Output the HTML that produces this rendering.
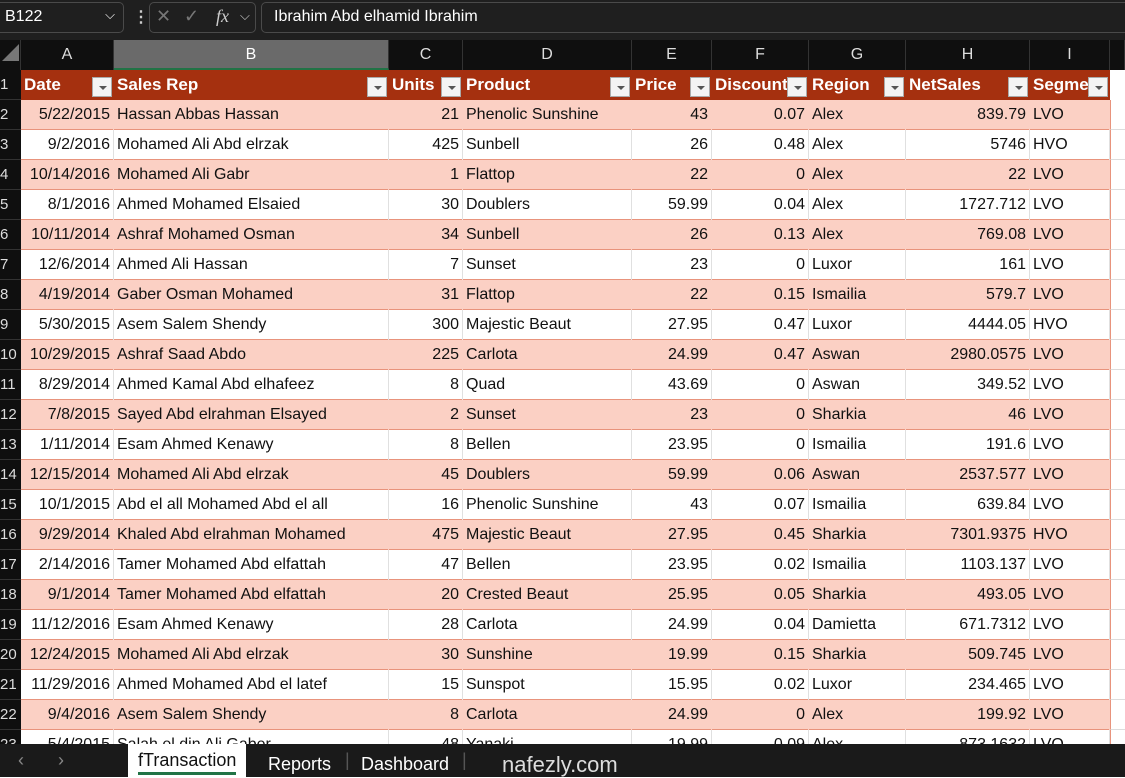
<!DOCTYPE html><html><head><style>
*{margin:0;padding:0;box-sizing:border-box}
body{width:1125px;height:777px;overflow:hidden;background:#fff;font-family:"Liberation Sans",sans-serif;position:relative}
.top{position:absolute;left:0;top:0;width:1125px;height:40px;background:#1f1f1f}
.nb{position:absolute;left:-6px;top:2px;width:130px;height:31px;border:1px solid #4a4a4a;border-radius:5px;color:#fff;font-size:16px;padding:5px 0 0 10px}
.fx{position:absolute;left:149px;top:2px;width:107px;height:31px;border:1px solid #4a4a4a;border-radius:5px;color:#777;font-size:18px}
.fb{position:absolute;left:261px;top:2px;width:880px;height:31px;border:1px solid #4a4a4a;border-radius:5px;color:#fff;font-size:16px;padding:5px 0 0 12px}
.ch{position:absolute;top:40px;height:30px;background:#0f0f0f;color:#ddd;font-size:16px;text-align:center;line-height:30px;border-right:1px solid #333}
.rh{position:absolute;left:0;width:21px;height:30px;background:#0f0f0f;color:#ddd;font-size:15px;line-height:30px;border-bottom:1px solid #333}
.row{position:absolute;left:21px;height:30px;width:1089px}
.c{position:absolute;top:0;height:30px;line-height:30px;font-size:16px;color:#111;white-space:nowrap;overflow:hidden;padding:0 3px;border-right:1px solid #ddd}
.r{text-align:right}
.hd .c{color:#fff;font-weight:bold;font-size:17px;border-right:none}
.dd{position:absolute;top:7px;width:20px;height:20px;background:#f4f4f4;border:1px solid #aaa}
.dd:after{content:"";position:absolute;left:6px;top:8px;border:4px solid transparent;border-top:4px solid #555}
.tabs{position:absolute;left:0;top:744px;width:1125px;height:33px;background:#1a1a1a;color:#fff;font-size:18px}
</style></head><body>
<div class="top">
<div class="nb">B122<span style="position:absolute;right:8px;top:4px;font-size:13px">⌵</span></div>
<div style="position:absolute;left:133px;top:7px;color:#ccc;font-size:16px;font-weight:bold">⋮</div>
<div class="fx"><span style="position:absolute;left:6px;top:3px">✕</span><span style="position:absolute;left:34px;top:3px">✓</span><i style="position:absolute;left:66px;top:3px;color:#ccc;font-family:'Liberation Serif'">fx</i><span style="position:absolute;left:90px;top:5px;font-size:13px;color:#ccc">⌵</span></div>
<div class="fb">Ibrahim Abd elhamid Ibrahim</div>
</div>
<div class="ch" style="left:0;width:21px;"><div style="position:absolute;left:2px;top:4px;border-left:17px solid transparent;border-bottom:17px solid #777"></div></div>
<div class="ch" style="left:21px;width:93px">A</div>
<div class="ch" style="left:114px;width:275px;background:#6a6a6a;color:#fff;border-bottom:2px solid #217346">B</div>
<div class="ch" style="left:389px;width:74px">C</div>
<div class="ch" style="left:463px;width:169px">D</div>
<div class="ch" style="left:632px;width:80px">E</div>
<div class="ch" style="left:712px;width:97px">F</div>
<div class="ch" style="left:809px;width:97px">G</div>
<div class="ch" style="left:906px;width:124px">H</div>
<div class="ch" style="left:1030px;width:80px">I</div>
<div class="ch" style="left:1110px;width:15px"></div>
<div id="g"></div>
<div class="tabs">
<span style="position:absolute;left:18px;top:6px;color:#888">‹</span><span style="position:absolute;left:58px;top:6px;color:#888">›</span>
<div style="position:absolute;left:128px;top:0;width:118px;height:33px;background:#fff;color:#111;padding:6px 0 0 10px">fTransaction<div style="position:absolute;left:10px;right:10px;bottom:2px;height:3px;background:#217346"></div></div>
<span style="position:absolute;left:268px;top:10px">Reports</span>
<span style="position:absolute;left:345px;top:6px;color:#555">|</span>
<span style="position:absolute;left:361px;top:10px">Dashboard</span>
<span style="position:absolute;left:462px;top:6px;color:#555">|</span>
<span style="position:absolute;left:502px;top:8px;color:#ddd;font-size:22px">nafezly.com</span>
</div>
<script>
var X=[0,93,368,442,611,691,788,885,1009,1089];
var al=[1,0,1,0,1,1,0,1,0];
var H=["Date","Sales Rep","Units","Product","Price","Discount","Region","NetSales","Segme"];
var D=`5/22/2015|Hassan Abbas Hassan|21|Phenolic Sunshine|43|0.07|Alex|839.79|LVO
9/2/2016|Mohamed Ali Abd elrzak|425|Sunbell|26|0.48|Alex|5746|HVO
10/14/2016|Mohamed Ali Gabr|1|Flattop|22|0|Alex|22|LVO
8/1/2016|Ahmed Mohamed Elsaied|30|Doublers|59.99|0.04|Alex|1727.712|LVO
10/11/2014|Ashraf Mohamed Osman|34|Sunbell|26|0.13|Alex|769.08|LVO
12/6/2014|Ahmed Ali Hassan|7|Sunset|23|0|Luxor|161|LVO
4/19/2014|Gaber Osman Mohamed|31|Flattop|22|0.15|Ismailia|579.7|LVO
5/30/2015|Asem Salem Shendy|300|Majestic Beaut|27.95|0.47|Luxor|4444.05|HVO
10/29/2015|Ashraf Saad Abdo|225|Carlota|24.99|0.47|Aswan|2980.0575|LVO
8/29/2014|Ahmed Kamal Abd elhafeez|8|Quad|43.69|0|Aswan|349.52|LVO
7/8/2015|Sayed Abd elrahman Elsayed|2|Sunset|23|0|Sharkia|46|LVO
1/11/2014|Esam Ahmed Kenawy|8|Bellen|23.95|0|Ismailia|191.6|LVO
12/15/2014|Mohamed Ali Abd elrzak|45|Doublers|59.99|0.06|Aswan|2537.577|LVO
10/1/2015|Abd el all Mohamed Abd el all|16|Phenolic Sunshine|43|0.07|Ismailia|639.84|LVO
9/29/2014|Khaled Abd elrahman Mohamed|475|Majestic Beaut|27.95|0.45|Sharkia|7301.9375|HVO
2/14/2016|Tamer Mohamed Abd elfattah|47|Bellen|23.95|0.02|Ismailia|1103.137|LVO
9/1/2014|Tamer Mohamed Abd elfattah|20|Crested Beaut|25.95|0.05|Sharkia|493.05|LVO
11/12/2016|Esam Ahmed Kenawy|28|Carlota|24.99|0.04|Damietta|671.7312|LVO
12/24/2015|Mohamed Ali Abd elrzak|30|Sunshine|19.99|0.15|Sharkia|509.745|LVO
11/29/2016|Ahmed Mohamed Abd el latef|15|Sunspot|15.95|0.02|Luxor|234.465|LVO
9/4/2016|Asem Salem Shendy|8|Carlota|24.99|0|Alex|199.92|LVO
5/4/2015|Salah el din Ali Gaber|48|Yanaki|19.99|0.09|Alex|873.1632|LVO`.split("\n");
var h="";
h+='<div class="rh" style="top:70px">1</div><div class="row hd" style="top:70px;background:#a5300f">';
for(var i=0;i<9;i++){h+='<div class="c" style="left:'+X[i]+'px;width:'+(X[i+1]-X[i])+'px">'+H[i]+'</div><div class="dd" style="left:'+(X[i+1]-22)+'px"></div>';}
h+='</div>';
for(var r=0;r<D.length;r++){var y=100+r*30,f=D[r].split("|"),bg=r%2==0?"#fbd0c4":"#fff";
h+='<div class="rh" style="top:'+y+'px">'+(r+2)+'</div><div class="row" style="top:'+y+'px;background:'+bg+';border-bottom:1px solid #e8937c">';
for(var i=0;i<9;i++){h+='<div class="c'+(al[i]?' r':'')+'" style="left:'+X[i]+'px;width:'+(X[i+1]-X[i])+'px;border-right-color:'+(r%2==0?'#fbd0c4':'#e0e0e0')+'">'+f[i]+'</div>';}
h+='</div><div style="position:absolute;left:1110px;top:'+y+'px;width:15px;height:30px;border-bottom:1px solid #ddd;border-left:1px solid #e8937c"></div>';}
document.getElementById("g").innerHTML=h;
</script>
</body></html>
